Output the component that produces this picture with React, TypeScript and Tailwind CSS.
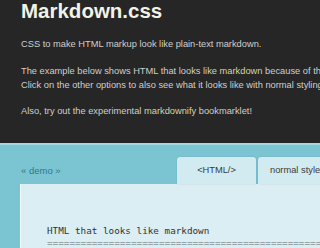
const App = () => {
  return (
    <div className="w-[320px] h-[248px] overflow-hidden bg-[#7bc4d2] font-['Liberation_Sans',Arial,sans-serif]">
      <header className="bg-[#262626] h-[143px] pl-[21px] pt-px">
        <h1 className="text-[20.5px] leading-[20px] font-bold text-[#f2f2e6] whitespace-nowrap">Markdown.css</h1>
        <div className="text-[9.3px] leading-[14px] text-[#cfcfcf] whitespace-nowrap">
          <p className="mt-[16px]">CSS to make HTML markup look like plain-text markdown.</p>
          <p className="mt-[13px]">
            The example below shows HTML that looks like <a className="text-[#d6d6a4]">markdown</a> because of the stylesheet.
            <br />
            Click on the other options to also see what it looks like with normal styling.
          </p>
          <p className="mt-[12px]">
            Also, try out the experimental <a className="text-[#d6d6a4]">markdownify</a> bookmarklet!
          </p>
        </div>
      </header>
      <div className="h-[2px] bg-[#a2d8e2]" />
      <main className="pl-[20px] pt-[12px]">
        <div className="flex items-end">
          <a className="shrink-0 text-[9.5px] text-[#2a7a90] pl-px pb-[6px] w-[157px] whitespace-nowrap">« demo »</a>
          <div className="flex shrink-0 gap-[2px]">
            <div className="w-[79px] h-[27px] rounded-t-[3px] bg-[#d2ebf1] shadow-[0_0_2px_rgba(0,0,0,0.12)] flex items-center justify-center text-[9.3px] text-[#3a3a3a]">
              &lt;HTML/&gt;
            </div>
            <div className="w-[80px] h-[27px] rounded-tl-[3px] bg-[#d2ebf1] shadow-[0_0_2px_rgba(0,0,0,0.12)] flex items-center pl-[12px] text-[9.3px] text-[#3a3a3a] whitespace-nowrap">
              normal style
            </div>
          </div>
        </div>
        <div className="bg-[#daeef4] border-l border-[#f2fafc] h-[80px] pl-[26px] pt-[41px] font-['DejaVu_Sans_Mono',monospace] text-[9.3px] leading-[12px] text-[#333] whitespace-nowrap overflow-hidden">
          <div>HTML that looks like markdown</div>
          <div className="text-[#8a9599]">{'='.repeat(60)}</div>
        </div>
      </main>
    </div>
  );
};

export default App;
